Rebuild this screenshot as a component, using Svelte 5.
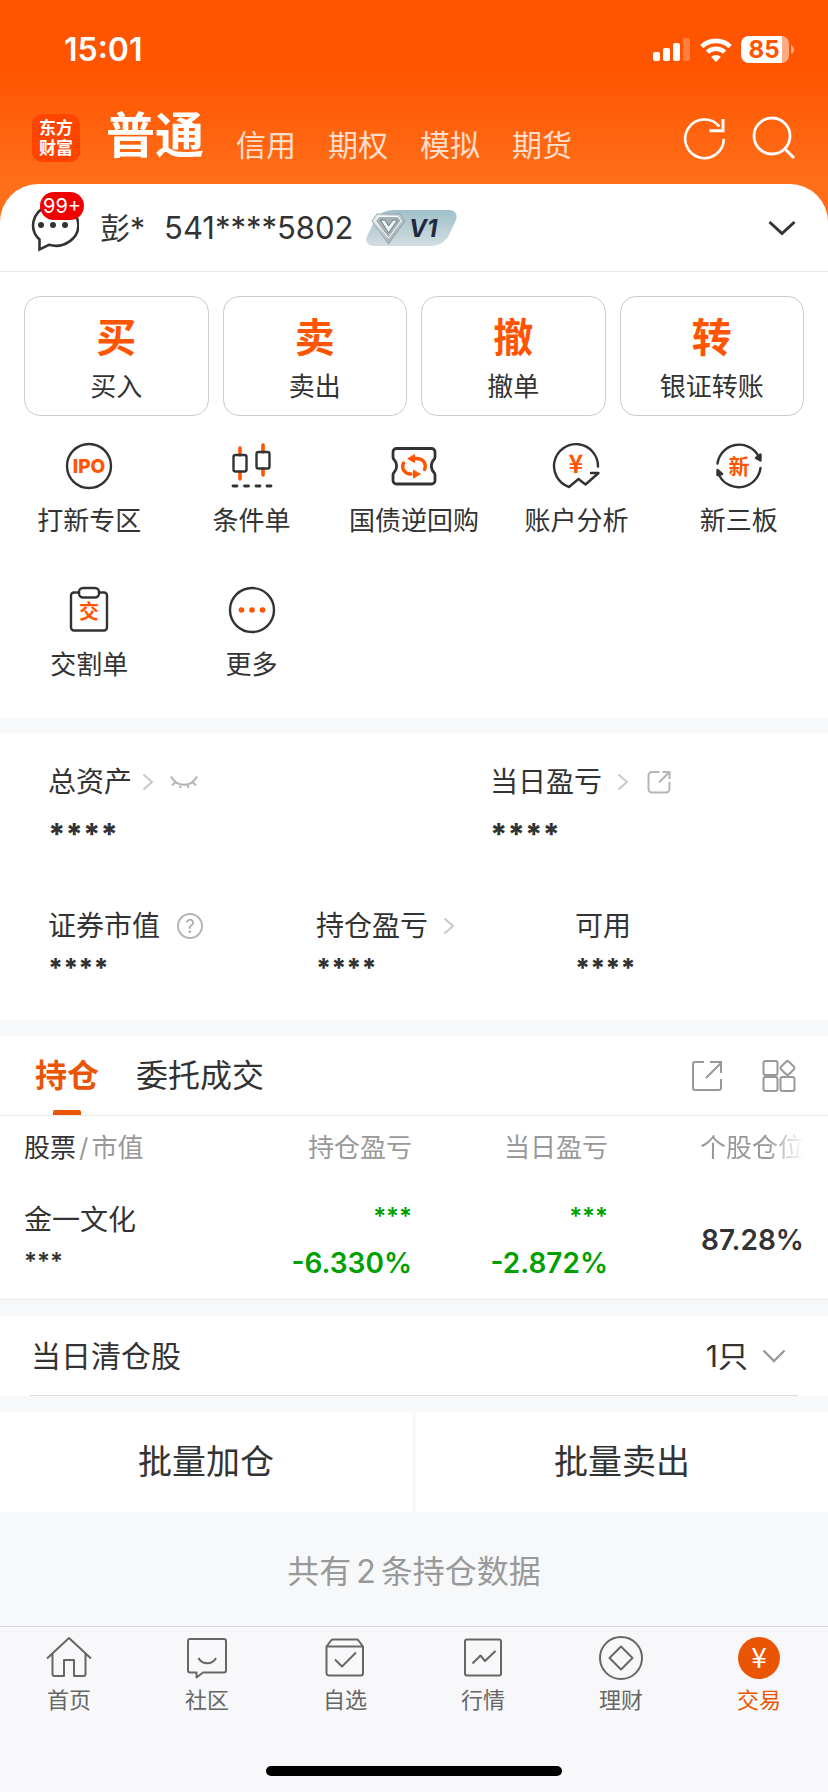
<script>
  const markets = ['信用', '期权', '模拟', '期货'];
  const actions = [
    { mark: '买', label: '买入' },
    { mark: '卖', label: '卖出' },
    { mark: '撤', label: '撤单' },
    { mark: '转', label: '银证转账' }
  ];
  const tools = [
    { icon: 'ipo', label: '打新专区' },
    { icon: 'candles', label: '条件单' },
    { icon: 'ticket', label: '国债逆回购' },
    { icon: 'analysis', label: '账户分析' },
    { icon: 'board', label: '新三板' },
    { icon: 'clipboard', label: '交割单' },
    { icon: 'more', label: '更多' }
  ];
  const positions = [
    { name: '金一文化', value: '***', total: '***', totalRate: '-6.330%', day: '***', dayRate: '-2.872%', share: '87.28%' }
  ];
  const tabs = [
    { icon: 'home', label: '首页' },
    { icon: 'community', label: '社区' },
    { icon: 'watchlist', label: '自选' },
    { icon: 'market', label: '行情' },
    { icon: 'wealth', label: '理财' },
    { icon: 'trade', label: '交易', active: true }
  ];
</script>

{#snippet arrow()}
  <svg class="arrow" width="12" height="18" viewBox="0 0 12 18" aria-hidden="true">
    <path d="M1.5 1.5 10 9 1.5 16.5" fill="none" stroke="#c8c8c8" stroke-width="2" />
  </svg>
{/snippet}

<div class="page">
  <header class="top">
    <div class="status">
      <time>15:01</time>
      <div class="signals">
        <svg width="38" height="24" viewBox="0 0 38 24" fill="#fff" aria-label="信号">
          <rect x="0" y="14" width="7" height="9" rx="2" />
          <rect x="10" y="10" width="7" height="13" rx="2" />
          <rect x="20" y="5" width="7" height="18" rx="2" />
          <rect x="30" y="0" width="7" height="23" rx="2" opacity=".25" />
        </svg>
        <svg width="32" height="24" viewBox="0 0 32 24" fill="none" stroke="#fff" stroke-width="4.6" aria-label="无线网络">
          <path d="M1.8 8.6a20.5 20.5 0 0 1 28.4 0" />
          <path d="M7.4 14.2a12.4 12.4 0 0 1 17.2 0" />
          <path d="M16 24l-4.9-5a7 7 0 0 1 9.8 0z" fill="#fff" stroke="none" />
        </svg>
        <svg width="54" height="28" viewBox="0 0 54 28" aria-label="电量">
          <path d="M8 0h33v27H8a8 8 0 0 1-8-8V8a8 8 0 0 1 8-8z" fill="#fff" />
          <path d="M41 0a7.500 7.500 0 0 1 7 8v11a7.500 7.500 0 0 1-7 8z" fill="#fff" opacity=".5" />
          <path d="M50 9c4 1.500 4 7.500 0 9z" fill="#fff" opacity=".5" />
          <text x="23" y="22" text-anchor="middle" font-size="24" font-weight="700" fill="#ff5500">85</text>
        </svg>
      </div>
    </div>
    <nav class="nav" aria-label="账户类型">
      <div class="logo">东方<br />财富</div>
      <div class="markets">
        <a class="current" href="#normal">普通</a>
        {#each markets as m}
          <a href="#market">{m}</a>
        {/each}
      </div>
      <button class="icon-btn" aria-label="刷新">
        <svg width="44" height="44" viewBox="0 0 44 44" fill="none" stroke="#fff" stroke-width="2.600">
          <path d="M41.800 23a19.300 19.300 0 1 1-4.500-12.600" />
          <path d="M27.500 14.800H41V3" stroke-width="3" />
        </svg>
      </button>
      <button class="icon-btn" aria-label="搜索">
        <svg width="44" height="44" viewBox="0 0 44 44" fill="none" stroke="#fff" stroke-width="2.800">
          <circle cx="20" cy="20" r="18" />
          <path d="M33 33l9 9" stroke-width="3" />
        </svg>
      </button>
    </nav>
  </header>

  <main>
    <section class="sheet">
      <div class="account">
        <button class="message" aria-label="消息">
          <svg width="50" height="52" viewBox="0 0 50 52">
            <path d="M10.500 49.500V39.500A22.600 20.500 0 1 1 20 44.800z" fill="none" stroke="#333" stroke-width="2.600" />
            <circle cx="12" cy="25" r="3" fill="#333" />
            <circle cx="24" cy="25" r="3" fill="#333" />
            <circle cx="36" cy="25" r="3" fill="#333" />
          </svg>
          <span class="count">99+</span>
        </button>
        <span class="name">彭*</span>
        <span class="number">541****5802</span>
        <svg class="level" width="92" height="36" viewBox="0 0 92 36" aria-label="V1">
          <defs>
            <linearGradient id="plate" x1="0" y1="0" x2="0" y2="1">
              <stop offset="0" stop-color="#9fc0c9" />
              <stop offset="1" stop-color="#d2dde1" />
            </linearGradient>
            <linearGradient id="gem" x1="0" y1="0" x2="1" y2="1">
              <stop offset="0" stop-color="#f4f8f9" />
              <stop offset="1" stop-color="#8c9a9f" />
            </linearGradient>
          </defs>
          <path d="M28 0h55c6 0 9 5 7 10l-6 13C80 32 73 36 64 36H8C1 36-1 31 1 26L8 12C12 4 19 0 28 0z" fill="url(#plate)" />
          <path d="M11 4h23l5 7-16.500 23L6 11z" fill="url(#gem)" stroke="#8fa0a6" />
          <path d="M13 6.500h19l3 4.500-12.500 17L9.500 11z" fill="#a4b2b7" stroke="#fff" />
          <path d="M14.500 10h4.500l3.500 6 4.500-6h4.500l-9 13z" fill="#eef3f4" stroke="#6e7c82" />
          <text x="43" y="27" font-size="24" font-weight="700" font-style="italic" fill="#1f2940">V1</text>
        </svg>
        <button class="expand" aria-label="切换账户">
          <svg width="28" height="16" viewBox="0 0 28 16">
            <path d="M1.500 2 14 13.500 26.500 2" fill="none" stroke="#333" stroke-width="3" />
          </svg>
        </button>
      </div>

      <div class="actions">
        {#each actions as a}
          <button>
            <strong>{a.mark}</strong>
            <span>{a.label}</span>
          </button>
        {/each}
      </div>

      <div class="tools">
        {#each tools as t}
          <a href="#tool">
            <svg width="48" height="48" viewBox="0 0 48 48" fill="none" stroke="#333" stroke-width="2.400" stroke-linecap="round" stroke-linejoin="round" aria-hidden="true">
              {#if t.icon === 'ipo'}
                <circle cx="24" cy="24" r="22" />
                <text class="glyph ipo" x="24" y="31" text-anchor="middle" font-size="19">IPO</text>
              {:else if t.icon === 'candles'}
                <path d="M12 6v7m0 18v6M35 3v7m0 17v6" stroke="#ff5500" stroke-width="3.600" />
                <rect x="5.500" y="13" width="13" height="16.500" rx="2" />
                <rect x="28.500" y="10" width="13" height="16.500" rx="2" />
                <path d="M5 44h4m7.500 0h4m7.500 0h4m7 0h4" stroke-width="2.800" />
              {:else if t.icon === 'ticket'}
                <path d="M6.500 6.500h35a3.500 3.500 0 0 1 3.500 3.500v5q0 1.500-1 2.500c-3.500 3.500-3.500 9.500 0 13q1 1 1 2.500v5.500a3.500 3.500 0 0 1-3.500 3.500h-35A3.500 3.500 0 0 1 3 38.500V33q0-1.500 1-2.500c3.500-3.500 3.500-9.500 0-13q-1-1-1-2.500v-5a3.500 3.500 0 0 1 3.500-3.500z" stroke-width="2.800" />
                <g stroke="#ff5500" stroke-width="3.400">
                  <path d="M13.500 21c-2.500 6 1.500 11 7.500 11M24 16.500h2c7.500 0 11 5.500 8.500 11" />
                  <path d="M24.500 13v7.500L18 16.800z" fill="#ff5500" stroke-width="1" />
                  <path d="M23.500 28.500V36l6.500-3.800z" fill="#ff5500" stroke-width="1" />
                </g>
              {:else if t.icon === 'analysis'}
                <path d="M46 24.500A22 22 0 1 0 17 45l9.500-8 7 5.500L46.500 31H39" />
                <text class="glyph yen" x="24" y="31" text-anchor="middle" font-size="25">¥</text>
              {:else if t.icon === 'board'}
                <path d="M2.500 21.500A22 22 0 0 1 43.500 14M45.500 26A22 22 0 0 1 4.500 34" />
                <path d="M45.500 12.500v6L41 16zM2.500 28v5l4.500-1z" fill="#333" />
                <text class="glyph" x="24" y="31.500" text-anchor="middle" font-size="21">新</text>
              {:else if t.icon === 'clipboard'}
                <path d="M14 6.500H9A3 3 0 0 0 6 9.500v32a3 3 0 0 0 3 3h30a3 3 0 0 0 3-3v-32a3 3 0 0 0-3-3h-5" />
                <rect x="14" y="2" width="20" height="9.500" rx="4" />
                <text class="glyph" x="24" y="33" text-anchor="middle" font-size="20">交</text>
              {:else}
                <circle cx="24" cy="24" r="22" />
                <g fill="#ff5500" stroke="none">
                  <circle cx="13.500" cy="24" r="2.800" />
                  <circle cx="24" cy="24" r="2.800" />
                  <circle cx="34.500" cy="24" r="2.800" />
                </g>
              {/if}
            </svg>
            <span>{t.label}</span>
          </a>
        {/each}
      </div>
    </section>

    <section class="assets">
      <dl class="pair">
        <div>
          <dt class="tight">
            总资产 {@render arrow()}
            <svg width="28" height="14" viewBox="0 0 28 14" fill="none" stroke="#b5b5b5" stroke-width="2" aria-hidden="true">
              <path d="M1 1.500c6 11 20 11 26 0M5.500 7 2 10.500M11 9.500l-1 3.500M17.500 9.500l1 3.500M22.500 7l3.500 3.500" />
            </svg>
          </dt>
          <dd>****</dd>
        </div>
        <div>
          <dt>
            当日盈亏 {@render arrow()}
            <svg width="24" height="24" viewBox="0 0 24 24" fill="none" stroke="#b5b5b5" stroke-width="2" aria-hidden="true">
              <path d="M12.500 2H5a3.500 3.500 0 0 0-3.500 3.500V19A3.500 3.500 0 0 0 5 22.500h14a3.500 3.500 0 0 0 3.500-3.500v-7M12 12.500 22 2.500M15.500 2h7v7" />
            </svg>
          </dt>
          <dd>****</dd>
        </div>
      </dl>
      <dl class="triple">
        <div>
          <dt>
            证券市值
            <svg class="help" width="26" height="26" viewBox="0 0 26 26" aria-label="说明">
              <circle cx="13" cy="13" r="12" fill="none" stroke="#b5b5b5" stroke-width="2" />
              <text x="13" y="19.500" text-anchor="middle" font-size="18" fill="#a8a8a8">?</text>
            </svg>
          </dt>
          <dd>****</dd>
        </div>
        <div>
          <dt>持仓盈亏 {@render arrow()}</dt>
          <dd>****</dd>
        </div>
        <div>
          <dt>可用</dt>
          <dd>****</dd>
        </div>
      </dl>
    </section>

    <section class="holdings">
      <div class="holding-tabs">
        <button class="selected">持仓</button>
        <button>委托成交</button>
        <div class="tab-tools">
          <button class="icon-btn" aria-label="分享">
            <svg width="32" height="32" viewBox="0 0 32 32" fill="none" stroke="#999" stroke-width="2">
              <path d="M13 2H4a2 2 0 0 0-2 2v24a2 2 0 0 0 2 2h24a2 2 0 0 0 2-2v-9M15 18 30 3M19 2h11v11" />
            </svg>
          </button>
          <button class="icon-btn" aria-label="更多功能">
            <svg width="34" height="34" viewBox="0 0 34 34" fill="none" stroke="#999" stroke-width="2">
              <rect x="1.500" y="2" width="14" height="14" rx="2" />
              <rect x="1.500" y="18" width="14" height="14" rx="2" />
              <rect x="18.500" y="18" width="14" height="14" rx="2" />
              <rect x="20" y="3.500" width="11" height="11" rx="2.500" transform="rotate(45 25.500 9)" />
            </svg>
          </button>
        </div>
      </div>
      <table>
        <thead>
          <tr>
            <th><b>股票</b><i>/</i>市值</th>
            <th>持仓盈亏</th>
            <th>当日盈亏</th>
            <th><span class="fade">个股仓位</span></th>
          </tr>
        </thead>
        <tbody>
          {#each positions as p}
            <tr>
              <td><div class="stock">{p.name}</div><div class="masked">{p.value}</div></td>
              <td class="down"><div class="stars">{p.total}</div><div class="rate">{p.totalRate}</div></td>
              <td class="down"><div class="stars">{p.day}</div><div class="rate">{p.dayRate}</div></td>
              <td class="share">{p.share}</td>
            </tr>
          {/each}
        </tbody>
      </table>
    </section>

    <section class="cleared">
      <button>
        <span>当日清仓股</span>
        <span class="qty">
          1只
          <svg width="24" height="14" viewBox="0 0 24 14" aria-hidden="true">
            <path d="M1.500 1.500 12 12 22.500 1.500" fill="none" stroke="#999" stroke-width="2.400" />
          </svg>
        </span>
      </button>
    </section>

    <div class="batch">
      <button>批量加仓</button>
      <button>批量卖出</button>
    </div>

    <p class="total">共有<span>2</span>条持仓数据</p>
  </main>

  <nav class="tabbar" aria-label="主导航">
    <div class="tab-list">
      {#each tabs as t}
        <a href="#tab" class:active={t.active}>
          <svg width="46" height="46" viewBox="0 0 46 46" fill="none" stroke="#666" stroke-width="2" stroke-linejoin="round" aria-hidden="true">
            {#if t.icon === 'home'}
              <path d="M1 23.500 23 3l22 20.500M6.500 19v20a2 2 0 0 0 2 2H18V25h10v16h9.500a2 2 0 0 0 2-2V19" />
            {:else if t.icon === 'community'}
              <path d="M6 4h34a2 2 0 0 1 2 2v29.500a2 2 0 0 1-2 2H19l-6.500 5v-5H6a2 2 0 0 1-2-2V6a2 2 0 0 1 2-2z" />
              <path d="M14.500 23c3.500 7 14 7 17.500 0" />
            {:else if t.icon === 'watchlist'}
              <path d="M4.500 11.500V38a2.500 2.500 0 0 0 2.500 2.500h31.500A2.500 2.500 0 0 0 41 38V11.500M4.500 11.500 9 5.500q.7-1 2-1h23.500q1.300 0 2 1l4.500 6zM13 24.500l7 7L34 17.500" />
            {:else if t.icon === 'market'}
              <rect x="5" y="4.500" width="36" height="36" rx="2" />
              <path d="M12.500 28.500 20.500 20.500l4.500 5.500L35.500 16" />
            {:else if t.icon === 'wealth'}
              <circle cx="23" cy="23" r="21" />
              <path d="M23 11.500 34.500 23 23 34.500 11.500 23z" />
            {:else}
              <circle cx="23" cy="23" r="21" fill="#ea5504" stroke="none" />
              <text class="yen" x="23" y="33" text-anchor="middle" font-size="28" fill="#fff" stroke="none">¥</text>
            {/if}
          </svg>
          <span>{t.label}</span>
        </a>
      {/each}
    </div>
    <div class="home-bar"></div>
  </nav>
</div>

<style>
  :global(body) {
    background: #f6f8fa;
  }
  .page {
    display: flex;
    flex-direction: column;
    min-height: 100vh;
    color: #333;
    font-family: Inter, 'Noto Sans CJK SC', sans-serif;
    font-size: 26px;
    line-height: 36px;
  }
  .page *,
  .page {
    box-sizing: border-box;
  }
  button {
    margin: 0;
    padding: 0;
    border: 0;
    background: none;
    color: inherit;
    font: inherit;
    cursor: pointer;
  }
  a {
    color: inherit;
    text-decoration: none;
  }
  svg {
    display: block;
    flex: none;
  }

  .top {
    padding-bottom: 60px;
    background: linear-gradient(#ff5500 70px, #ff6f1a 184px);
    color: #fff;
  }
  .status {
    display: flex;
    align-items: center;
    justify-content: space-between;
    height: 100px;
    padding: 0 33px 0 64px;
  }
  .status time {
    font-size: 32px;
    font-weight: 600;
  }
  .signals {
    display: flex;
    align-items: center;
    gap: 9px;
  }
  .nav {
    display: flex;
    align-items: center;
    height: 64px;
    padding: 0 32px;
  }
  .logo {
    width: 48px;
    height: 48px;
    margin-top: 12px;
    padding-top: 4px;
    border-radius: 10px;
    background: #ff4400;
    font-size: 17px;
    font-weight: 700;
    line-height: 20px;
    text-align: center;
  }
  .markets {
    display: flex;
    flex: 1;
    align-items: flex-end;
    align-self: flex-end;
    gap: 32px;
    margin-left: 26px;
    font-size: 30px;
    line-height: 38px;
  }
  .markets a {
    color: rgba(255, 255, 255, 0.8);
  }
  .markets .current {
    color: #fff;
    font-size: 49px;
    font-weight: 600;
    line-height: 56px;
  }
  .nav .icon-btn {
    margin: 12px 0 0 26px;
  }

  .sheet {
    margin-top: -40px;
    border-radius: 38px 38px 0 0;
    background: #fff;
  }
  .account {
    display: flex;
    align-items: center;
    height: 88px;
    padding: 0 32px 0 29px;
    border-bottom: 1px solid #e9e9e9;
    font-size: 30px;
  }
  .message {
    position: relative;
    margin-top: -4px;
  }
  .count {
    position: absolute;
    top: -8px;
    left: 11px;
    height: 28px;
    padding: 0 3px;
    border-radius: 14px;
    background: #f00000;
    color: #fff;
    font-size: 20px;
    line-height: 28px;
  }
  .name {
    margin-left: 21px;
  }
  .number {
    margin: 0 12px 0 19px;
    font-size: 31px;
  }
  .expand {
    margin-left: auto;
  }

  .actions {
    display: grid;
    grid-template-columns: repeat(4, 1fr);
    gap: 14px;
    padding: 24px 24px 0;
  }
  .actions button {
    display: flex;
    flex-direction: column;
    align-items: center;
    height: 120px;
    padding-top: 16px;
    border: 1px solid #ccc;
    border-radius: 16px;
  }
  .actions strong {
    color: #ff5500;
    font-size: 40px;
    font-weight: 700;
    line-height: 50px;
  }
  .actions span {
    line-height: 48px;
  }
  .tools {
    display: grid;
    grid-template-columns: repeat(5, 1fr);
    row-gap: 43px;
    padding: 26px 8px 31px;
  }
  .tools a {
    display: flex;
    flex-direction: column;
    align-items: center;
    gap: 9px;
    line-height: 44px;
    white-space: nowrap;
  }
  .glyph {
    fill: #ff5500;
    stroke: none;
    font-weight: 700;
  }
  .ipo {
    font-weight: 800;
  }
  .yen {
    font-family: 'Noto Sans CJK SC', sans-serif;
  }

  .assets {
    margin-top: 16px;
    padding: 30px 48px 20px;
    background: #fff;
  }
  dl {
    display: grid;
    margin: 0;
  }
  .pair {
    grid-template-columns: 442fr 290fr;
  }
  .triple {
    grid-template-columns: 268fr 259fr 205fr;
    margin-top: 52px;
  }
  dt {
    display: flex;
    align-items: center;
    font-size: 28px;
    line-height: 36px;
  }
  dd {
    height: 56px;
    margin: 0;
    padding-top: 8px;
    font-size: 30px;
    font-weight: 800;
    line-height: 52px;
  }
  .triple dd {
    padding-top: 0;
    font-size: 26px;
    line-height: 48px;
  }
  .arrow {
    margin: 0 18px 0 15px;
  }
  .tight .arrow {
    margin: 0 16px 0 10px;
  }
  .help {
    margin-left: 17px;
  }

  .holdings {
    margin-top: 16px;
    border-bottom: 1px solid #e9e9e9;
    background: #fff;
  }
  .holding-tabs {
    display: flex;
    align-items: center;
    height: 80px;
    padding: 0 32px 0 35px;
    border-bottom: 1px solid #e9e9e9;
    font-size: 32px;
  }
  .holding-tabs > button {
    height: 79px;
    margin-right: 37px;
  }
  .holding-tabs .selected {
    position: relative;
    color: #ea5504;
    font-weight: 700;
  }
  .selected::after {
    content: '';
    position: absolute;
    bottom: 0;
    left: 50%;
    width: 28px;
    height: 5px;
    margin-left: -14px;
    border-radius: 2px 2px 0 0;
    background: #ea5504;
  }
  .tab-tools {
    display: flex;
    gap: 39px;
    margin-left: auto;
  }
  table {
    width: calc(100% - 48px);
    margin: 0 24px;
    border-collapse: collapse;
    table-layout: fixed;
  }
  th,
  td {
    padding: 0;
    text-align: right;
  }
  th {
    height: 64px;
    color: #999;
    font-size: 26px;
    font-weight: 400;
  }
  th:first-child,
  td:first-child {
    width: 192px;
    text-align: left;
  }
  th b {
    color: #333;
    font-weight: 400;
  }
  th i {
    margin: 0 3px;
    font-style: normal;
  }
  .fade {
    -webkit-mask-image: linear-gradient(to right, #000 65%, transparent);
    mask-image: linear-gradient(to right, #000 65%, transparent);
  }
  td {
    height: 119px;
    font-size: 28px;
    line-height: 40px;
  }
  td:first-child {
    padding-top: 4px;
  }
  .masked,
  .stars {
    font-size: 24px;
    font-weight: 600;
  }
  .masked {
    line-height: 44px;
  }
  .stars,
  .rate {
    line-height: 46px;
  }
  .down {
    color: #00a000;
  }
  .rate,
  .share {
    font-weight: 600;
  }

  .cleared {
    margin-top: 16px;
    padding: 0 30px;
    background: #fff;
  }
  .cleared button {
    display: flex;
    align-items: center;
    justify-content: space-between;
    width: 100%;
    height: 80px;
    padding: 0 12px 0 1px;
    border-bottom: 1px solid #ddd;
    font-size: 30px;
  }
  .qty {
    display: flex;
    align-items: center;
    gap: 14px;
  }
  .batch {
    display: grid;
    grid-template-columns: 1fr 1fr;
    gap: 4px;
    margin-top: 16px;
  }
  .batch button {
    height: 100px;
    background: #fff;
    font-size: 34px;
  }
  .total {
    margin: 0;
    padding-top: 6px;
    color: #999;
    font-size: 32px;
    line-height: 108px;
    text-align: center;
  }
  .total span {
    margin: 0 5px;
  }

  .tabbar {
    display: flex;
    flex-direction: column;
    justify-content: space-between;
    height: 166px;
    margin-top: auto;
    padding: 8px 0 16px;
    border-top: 1px solid #d3d6de;
    background: #f8f8fa;
  }
  .tab-list {
    display: grid;
    grid-template-columns: repeat(6, 1fr);
  }
  .tab-list a {
    display: flex;
    flex-direction: column;
    align-items: center;
    gap: 4px;
    color: #666;
    font-size: 22px;
    line-height: 30px;
  }
  .tab-list .active {
    color: #ea5504;
  }
  .home-bar {
    width: 296px;
    height: 10px;
    margin: 0 auto;
    border-radius: 5px;
    background: #000;
  }
</style>
